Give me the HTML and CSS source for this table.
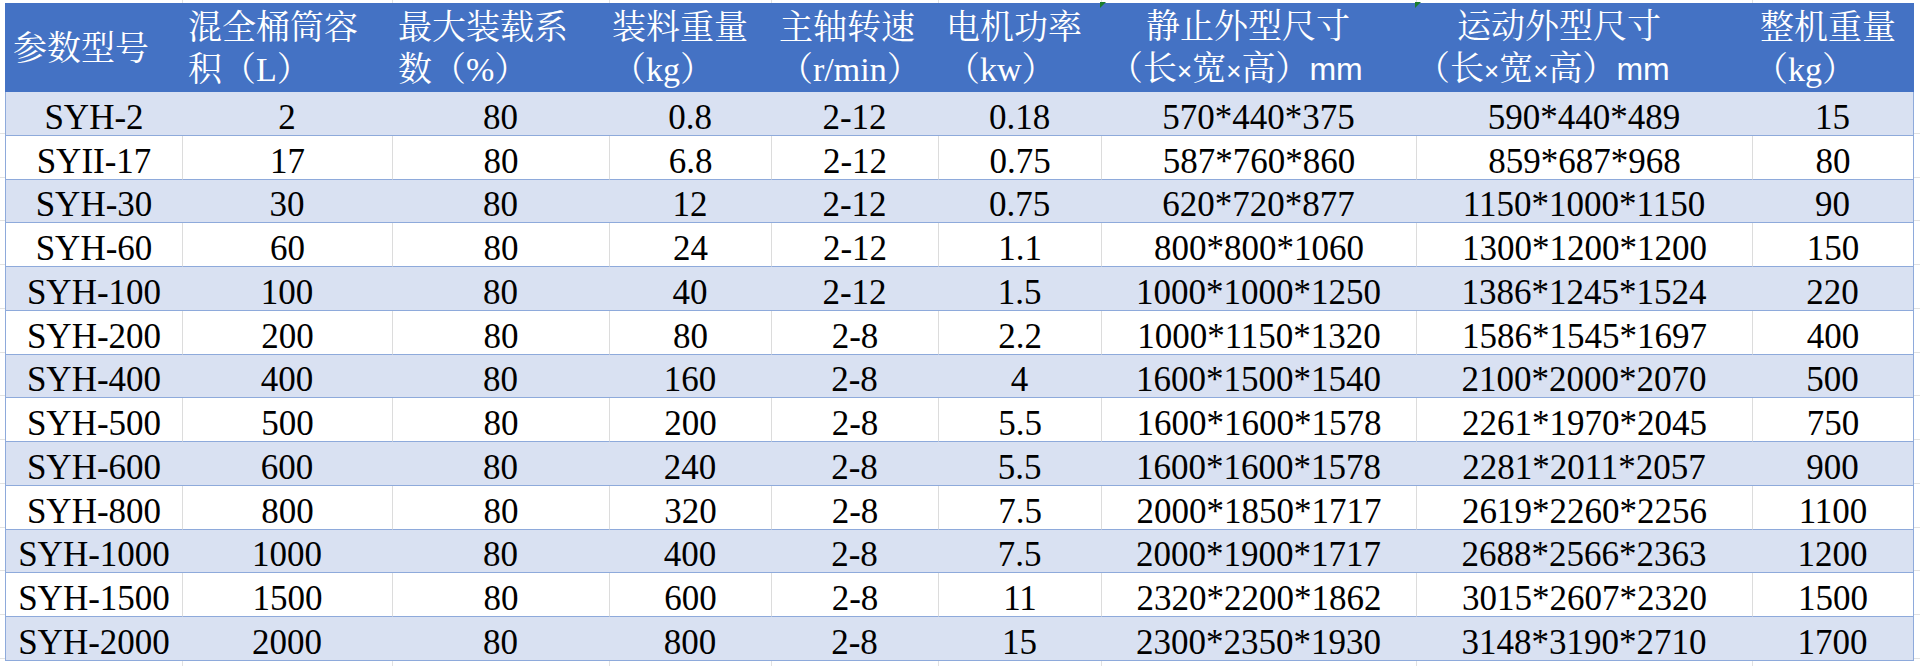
FILE: index.html
```html
<!DOCTYPE html>
<html lang="zh-CN">
<head>
<meta charset="utf-8">
<title>SYH 参数表</title>
<link rel="stylesheet" href="styles.css">
</head>
<body>
<div class="sheet">
<table class="spec">
<colgroup>
<col class="c1"><col class="c2"><col class="c3"><col class="c4"><col class="c5"><col class="c6"><col class="c7"><col class="c8"><col class="c9">
</colgroup>
<thead>
<tr class="head">
<th class="h1"><span class="l1">参数型号</span></th>
<th class="h2"><span class="l1">混全桶筒容</span><span class="l2">积（L）</span></th>
<th class="h3"><span class="l1">最大装载系</span><span class="l2">数（%）</span></th>
<th class="h4"><span class="l1">装料重量</span><span class="l2">（kg）</span></th>
<th class="h5"><span class="l1">主轴转速</span><span class="l2">（r/min）</span></th>
<th class="h6"><span class="l1">电机功率</span><span class="l2">（kw）</span></th>
<th class="h7 flag"><span class="l1">静止外型尺寸</span><span class="l2">（长<span class="x">×</span>宽<span class="x">×</span>高）<span class="sans">mm</span></span></th>
<th class="h8 flag"><span class="l1">运动外型尺寸</span><span class="l2">（长<span class="x">×</span>宽<span class="x">×</span>高）<span class="sans">mm</span></span></th>
<th class="h9"><span class="l1">整机重量</span><span class="l2">（kg）</span></th>
</tr>
</thead>
<tbody>
<tr class="band"><td>SYH-2</td><td>2</td><td>80</td><td>0.8</td><td>2-12</td><td>0.18</td><td>570*440*375</td><td>590*440*489</td><td>15</td></tr>
<tr class="plain"><td>SYII-17</td><td>17</td><td>80</td><td>6.8</td><td>2-12</td><td>0.75</td><td>587*760*860</td><td>859*687*968</td><td>80</td></tr>
<tr class="band"><td>SYH-30</td><td>30</td><td>80</td><td>12</td><td>2-12</td><td>0.75</td><td>620*720*877</td><td>1150*1000*1150</td><td>90</td></tr>
<tr class="plain"><td>SYH-60</td><td>60</td><td>80</td><td>24</td><td>2-12</td><td>1.1</td><td>800*800*1060</td><td>1300*1200*1200</td><td>150</td></tr>
<tr class="band"><td>SYH-100</td><td>100</td><td>80</td><td>40</td><td>2-12</td><td>1.5</td><td>1000*1000*1250</td><td>1386*1245*1524</td><td>220</td></tr>
<tr class="plain"><td>SYH-200</td><td>200</td><td>80</td><td>80</td><td>2-8</td><td>2.2</td><td>1000*1150*1320</td><td>1586*1545*1697</td><td>400</td></tr>
<tr class="band"><td>SYH-400</td><td>400</td><td>80</td><td>160</td><td>2-8</td><td>4</td><td>1600*1500*1540</td><td>2100*2000*2070</td><td>500</td></tr>
<tr class="plain"><td>SYH-500</td><td>500</td><td>80</td><td>200</td><td>2-8</td><td>5.5</td><td>1600*1600*1578</td><td>2261*1970*2045</td><td>750</td></tr>
<tr class="band"><td>SYH-600</td><td>600</td><td>80</td><td>240</td><td>2-8</td><td>5.5</td><td>1600*1600*1578</td><td>2281*2011*2057</td><td>900</td></tr>
<tr class="plain"><td>SYH-800</td><td>800</td><td>80</td><td>320</td><td>2-8</td><td>7.5</td><td>2000*1850*1717</td><td>2619*2260*2256</td><td>1100</td></tr>
<tr class="band"><td>SYH-1000</td><td>1000</td><td>80</td><td>400</td><td>2-8</td><td>7.5</td><td>2000*1900*1717</td><td>2688*2566*2363</td><td>1200</td></tr>
<tr class="plain"><td>SYH-1500</td><td>1500</td><td>80</td><td>600</td><td>2-8</td><td>11</td><td>2320*2200*1862</td><td>3015*2607*2320</td><td>1500</td></tr>
<tr class="band"><td>SYH-2000</td><td>2000</td><td>80</td><td>800</td><td>2-8</td><td>15</td><td>2300*2350*1930</td><td>3148*3190*2710</td><td>1700</td></tr>
</tbody>
</table>
</div>
</body>
</html>
```

FILE: styles.css
```css
html, body {
  margin: 0;
  padding: 0;
  background: #ffffff;
}

body {
  width: 1920px;
  height: 666px;
  overflow: hidden;
  font-family: "Liberation Serif", "Noto Serif CJK SC", "Noto Sans CJK SC", serif;
  color: #000000;
}

/* spreadsheet surface with faint gridlines around the table */
.sheet {
  box-sizing: border-box;
  width: 1920px;
  height: 666px;
  padding: 3px 0 0 5px;
  background:
    linear-gradient(to right,
      transparent 182px, #e2e2e2 182px, #e2e2e2 183px, transparent 183px,
      transparent 392px, #e2e2e2 392px, #e2e2e2 393px, transparent 393px,
      transparent 609px, #e2e2e2 609px, #e2e2e2 610px, transparent 610px,
      transparent 771px, #e2e2e2 771px, #e2e2e2 772px, transparent 772px,
      transparent 938px, #e2e2e2 938px, #e2e2e2 939px, transparent 939px,
      transparent 1101px, #e2e2e2 1101px, #e2e2e2 1102px, transparent 1102px,
      transparent 1416px, #e2e2e2 1416px, #e2e2e2 1417px, transparent 1417px,
      transparent 1752px, #e2e2e2 1752px, #e2e2e2 1753px, transparent 1753px),
    repeating-linear-gradient(to bottom,
      transparent 0, transparent 42.77px, #e2e2e2 42.77px, #e2e2e2 43.77px)
      0 90px / 100% 100% no-repeat,
    #ffffff;
}

.spec {
  border-collapse: separate;
  border-spacing: 0;
  table-layout: fixed;
  width: 1909px;
}

.c1 { width: 177px; }
.c2 { width: 210px; }
.c3 { width: 217px; }
.c4 { width: 162px; }
.c5 { width: 167px; }
.c6 { width: 163px; }
.c7 { width: 315px; }
.c8 { width: 336px; }
.c9 { width: 162px; }

/* header */
.head {
  height: 87px;
  background: #4472c4;
}

.head th {
  padding: 3px 0 0 0;
  font-weight: normal;
  font-size: 34px;
  line-height: 42px;
  color: #ffffff;
  text-align: left;
  vertical-align: middle;
  white-space: nowrap;
  overflow: visible;
}

.l1, .l2 {
  display: block;
}

.h1 { padding-left: 8px !important; }
.h2 { padding-left: 6px !important; }
.h3 { padding-left: 6px !important; }
.h4 { padding-left: 3px !important; }
.h5 { padding-left: 8px !important; }
.h6 { padding-left: 8px !important; }
.h7 { padding-left: 8px !important; }
.h7 .l1 { padding-left: 37px; }
.h8 { padding-left: 0 !important; }
.h8 .l1 { padding-left: 41px; }
.h9 { padding-left: 8px !important; }
.h9 .l2 { margin-left: -6px; }

.x {
  font-family: "Liberation Sans", "Noto Sans", sans-serif;
  font-size: 26px;
}

.sans {
  font-family: "Liberation Sans", "Noto Sans", sans-serif;
  font-size: 32px;
}

/* Excel-style green corner markers */
.flag {
  position: relative;
}

.flag::before {
  content: "";
  position: absolute;
  left: -1px;
  top: -1px;
  width: 0;
  height: 0;
  border-top: 6px solid #1b7d2c;
  border-right: 6px solid transparent;
}

/* body rows */
tbody tr {
  height: 43.77px;
}

tbody td {
  padding: 0;
  font-size: 35px;
  line-height: 34px;
  text-align: center;
  vertical-align: bottom;
  white-space: nowrap;
  border-bottom: 1px solid #8eaadb;
}

tbody td:first-child {
  border-left: 1px solid #8eaadb;
}

tbody td:last-child {
  border-right: 1px solid #8eaadb;
}

.band {
  background: #d9e1f2;
}

.plain {
  background: #ffffff;
}

.plain td + td {
  border-left: 1px solid #dcdcdc;
}
```
